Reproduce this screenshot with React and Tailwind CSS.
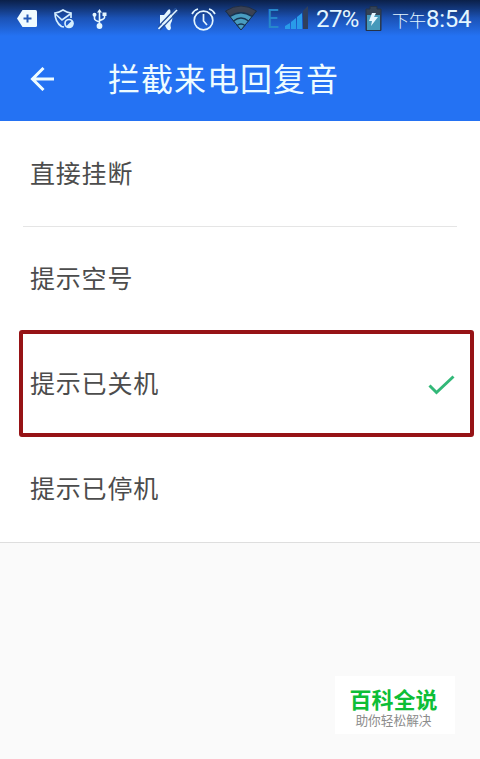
const options = [
  { id: 'hangup', label: '直接挂断', divider: true },
  { id: 'empty', label: '提示空号' },
  { id: 'off', label: '提示已关机', selected: true },
  { id: 'suspended', label: '提示已停机' },
];

function StatusBar() {
  return (
    <div className="flex h-10 items-start bg-linear-to-b from-[#0b2049] via-[#1b52b5] via-45% to-[#2472f3] to-90% pl-[17px] font-['Roboto','Noto_Sans_CJK_SC',sans-serif] text-[#e4f6ff]">
      <svg className="mt-2.5 h-[17px] w-5" viewBox="0 0 20 17">
        <path d="M5.5 0H18.5Q20 0 20 1.5V15.5Q20 17 18.5 17H5.5L0 8.5Z" fill="#f0fbff" />
        <path d="M10.5 4.5V12.5M6.5 8.5H14.5" stroke="#245bb8" strokeWidth="2" />
      </svg>
      <svg className="mt-[9px] ml-[17px] h-5 w-[21px]" viewBox="0 0 21 20" fill="none" stroke="#d5efff" strokeWidth="1.7">
        <path d="M17 9V4Q13 3.5 9 1Q5 3.5 1 4Q1 13 7.5 17.500L10 18" />
        <path d="M1.500 5L8 11L17 4.500" />
        <circle cx="15" cy="14.500" r="4" />
        <path d="M12 17.500L18 11.500A4 4 0 0 1 12 17.500Z" fill="#d5efff" stroke="none" />
      </svg>
      <svg className="mt-[9px] ml-[17px] h-5 w-[15px]" viewBox="0 0 15 20" fill="none" stroke="#e4f6ff" strokeWidth="1.6">
        <path d="M7.500 16V2M2.500 6V9.500Q2.500 11.500 7.500 13M12.500 5V8.500Q12.500 10 7.500 11.500" />
        <path d="M5 3.500L7.500 0L10 3.500ZM10.500 3.500H14.500V7H10.500Z" fill="#e4f6ff" stroke="none" />
        <circle cx="2.500" cy="5.800" r="2" fill="#e4f6ff" stroke="none" />
        <circle cx="7.500" cy="17" r="2.900" fill="#e4f6ff" stroke="none" />
      </svg>
      <svg className="mt-2 ml-[51px] h-[23px] w-[20px]" viewBox="0 0 20 23">
        <path d="M2 7H6L10 2Q12 0 12.500 3Q12 5 14 8Q15 12 13 15Q12 17 13 20Q12 24 9 21L6 16H2Z" fill="#e4f6ff" />
        <path d="M0 19L18 0" stroke="#24509a" strokeWidth="1.500" />
        <path d="M0.500 21L19 2" stroke="#e4f6ff" strokeWidth="1.700" />
        <path d="M2 22L20 3.500" stroke="#24509a" strokeWidth="1.200" />
      </svg>
      <svg className="mt-2 ml-[13px] h-[23px] w-[25px]" viewBox="0 0 25 23" fill="none" stroke="#e4f6ff" strokeWidth="1.700">
        <circle cx="12.500" cy="12.500" r="9.300" />
        <path d="M12.500 6V13L16 17M1 6Q3 2 7 1M18 1Q22 2 24 6" />
      </svg>
      <svg className="mt-[5px] ml-[9px] h-[26px] w-8" viewBox="0 0 32 26">
        <path d="M0.500 6Q16 -4 31.500 6L16 25Z" fill="#3b4254" stroke="#202e45" />
        <path d="M5 11.500Q16 4 27 11.500L16 25Z" fill="#499dc1" />
        <path d="M5 11.500Q16 4 27 11.500M8.500 16Q16 10 23.500 16M12 20.500Q16 17.500 20 20.500" fill="none" stroke="#173453" strokeWidth="1.500" />
        <path d="M0.500 6L16 25L31.500 6" fill="none" stroke="#173453" />
      </svg>
      <span className="ml-[10px] w-[18px] origin-left scale-x-85 text-[25px] leading-[39px] text-[#2787cb]">E</span>
      <svg className="mt-[5px] h-6 w-6" viewBox="0 0 24 24">
        <path d="M0 24V21L5 18V24ZM6 24V17L11 13V24ZM12 24V12L17 8V24Z" fill="#299be9" />
        <path d="M18 24V6L23 1V24Z" fill="#303f5b" />
      </svg>
      <span className="ml-[7px] w-[49px] text-[24px] leading-[39px] tracking-[-0.600px] whitespace-nowrap">27%</span>
      <svg className="mt-1.5 h-[25px] w-[17px]" viewBox="0 0 17 25">
        <path d="M1 3H5V0.500H12V3H16V24.500H1Z" fill="#344357" stroke="#243247" />
        <path d="M2 9H15V24H2Z" fill="#4699ba" />
        <path d="M7 7L4 15H7L6 20L13 11H9L11 7Z" fill="#e4f6ff" />
      </svg>
      <span className="ml-[10px] flex items-baseline whitespace-nowrap">
        <span className="text-[17px] leading-[38px] font-light">下午</span>
        <span className="text-[24px] leading-[38px] tracking-[-0.300px]">8:54</span>
      </span>
    </div>
  );
}

function Header() {
  return (
    <header className="flex h-[81px] items-center bg-[#2472f3] pb-1 pl-[30px] text-[#eefcff]">
      <svg className="h-6 w-6" viewBox="0 0 24 24" fill="none" stroke="currentColor" strokeWidth="3">
        <path d="M24 12H2M13.500 1L2.500 12L13.500 23" />
      </svg>
      <h1 className="ml-[54px] -mt-[3px] text-[32px] leading-[46px] tracking-[1px]">拦截来电回复音</h1>
    </header>
  );
}

function OptionRow({ option }) {
  return (
    <li className="relative px-[23px]">
      <div className={`flex items-center justify-between pl-[7px] ${option.divider ? 'h-[106px] border-b border-[#e5e5e5] pb-0.5' : 'h-[105px] pb-1'}`}>
        <span className="text-[25px] tracking-[0.800px] text-[#4c4c4c]">{option.label}</span>
        {option.selected && (
          <svg className="mt-1 mr-0.5 h-5 w-[27px]" viewBox="0 0 27 20" fill="none" stroke="#32b878" strokeWidth="3">
            <path d="M1.500 10.500L8.500 17.500L25.500 1.500" />
          </svg>
        )}
      </div>
      {option.selected && (
        <div className="absolute -top-0.5 right-1.5 bottom-0 left-[19px] rounded-[3px] border-4 border-[#961316]" />
      )}
    </li>
  );
}

export default function App() {
  return (
    <div className="flex h-[759px] w-[480px] flex-col overflow-hidden bg-[#fafafa] font-['Noto_Sans_CJK_SC',sans-serif]">
      <StatusBar />
      <Header />
      <ul className="border-b border-[#dedede] bg-white">
        {options.map((option) => (
          <OptionRow key={option.id} option={option} />
        ))}
      </ul>
      <div className="mt-auto mr-[25px] mb-[25px] flex h-[58px] w-[120px] flex-col items-center self-end bg-white pt-[7px] pr-[3px]">
        <strong className="text-[22px] leading-[30px] font-bold text-[#0dbe36]">百科全说</strong>
        <span className="text-[12.700px] leading-[13px] text-[#8c8c8c]">助你轻松解决</span>
      </div>
    </div>
  );
}
